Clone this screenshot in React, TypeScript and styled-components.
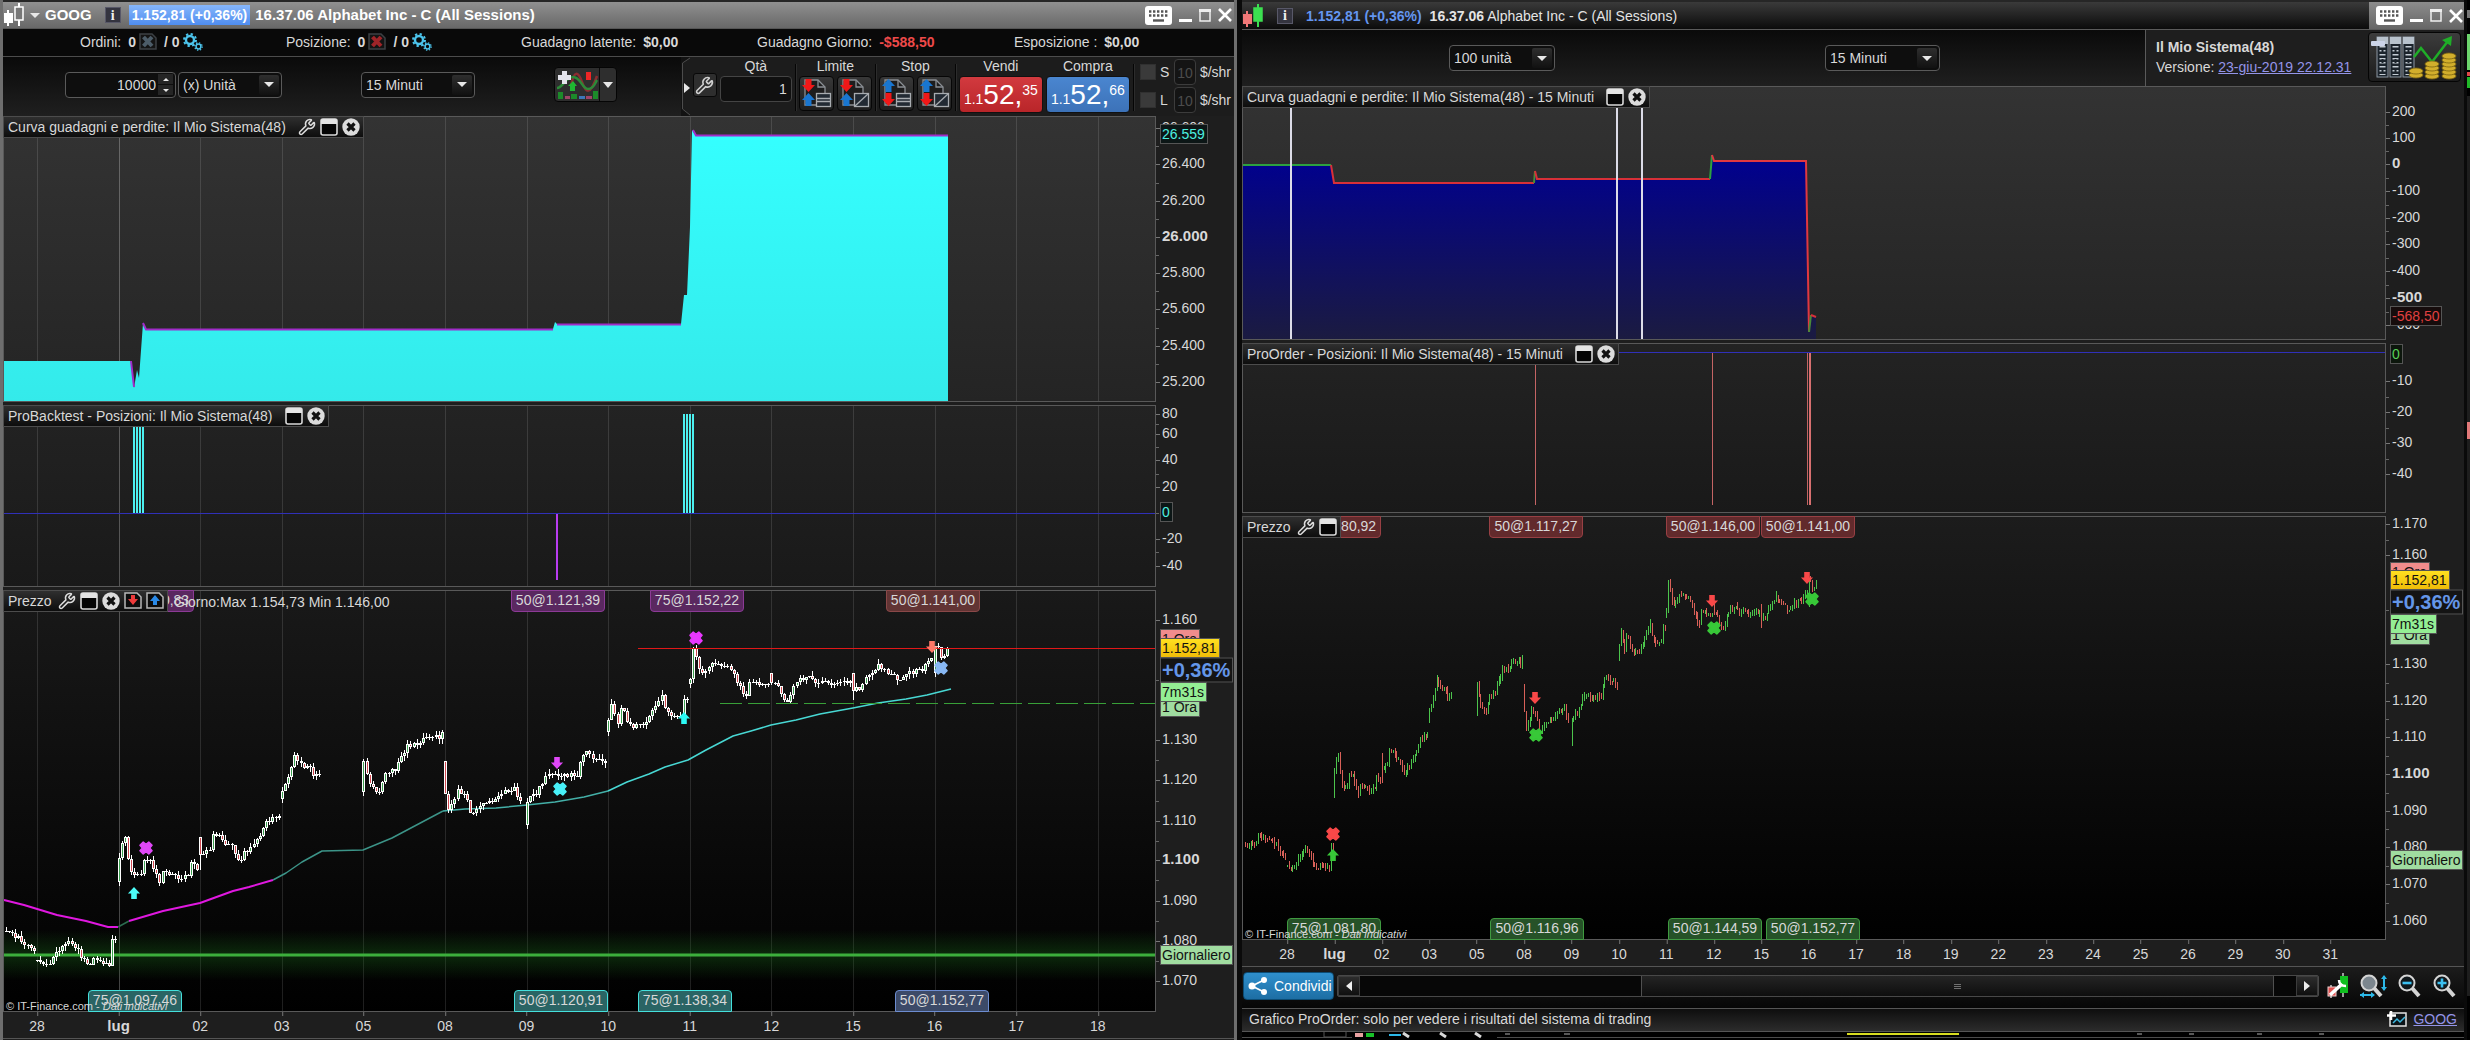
import React from "react";
import styled, { createGlobalStyle, css } from "styled-components";
import { Wrench } from "lucide-react";

/* ---------- market data ---------- */

type Point = [number, number];
interface Session {
  day: string;
  from: number;
  bars: number;
  open?: [number, number];
  path: Point[];
}
interface Bar {
  at: number;
  open: number;
  close: number;
  low: number;
  high: number;
}

const SESSIONS: Session[] = [
  { day: "27", from: 3, bars: 26, path: [[3, 1081.2], [8, 1080.6], [10, 1083.1], [15, 1082.5], [18, 1081.8], [21, 1080], [24, 1078.4], [25, 1077]] },
  { day: "28", from: 0, bars: 26, path: [[0, 1075.2], [3, 1074.2], [5, 1075.6], [7, 1077.9], [10, 1079.3], [13, 1077.6], [14, 1075.2], [17, 1074.2], [19, 1075.9], [21, 1074.6], [23, 1074.2], [24, 1080], [25, 1080.7]] },
  { day: "lug", from: 0, bars: 26, open: [1093.7, 1101.8], path: [[0, 1101], [1, 1104.8], [2, 1106.4], [3, 1100.5], [4, 1097.4], [5, 1095.9], [7, 1096.7], [8, 1099.8], [10, 1100], [11, 1097.8], [13, 1094.7], [14, 1097.3], [18, 1096.2], [20, 1094.9], [22, 1096.7], [23, 1099.3], [25, 1097.6]] },
  { day: "02", from: 0, bars: 26, open: [1097.6, 1105.8], path: [[0, 1101.8], [3, 1102.5], [4, 1106.4], [6, 1106.1], [8, 1104.4], [10, 1104.4], [11, 1101.8], [12, 1099.8], [14, 1101.8], [17, 1103.9], [19, 1106.4], [21, 1109.5], [23, 1110.5], [25, 1111]] },
  { day: "03", from: 0, bars: 13, open: [1114.2, 1118.3], path: [[0, 1117.8], [1, 1119.1], [3, 1122.7], [4, 1126.2], [5, 1124.7], [7, 1123.2], [9, 1123.2], [10, 1121.4], [12, 1121.7]] },
  { day: "05", from: 0, bars: 26, open: [1116, 1125.2], path: [[0, 1124.8], [1, 1121.2], [3, 1117.6], [5, 1117.6], [7, 1122.2], [10, 1122.7], [12, 1126.2], [14, 1128.3], [16, 1129.3], [18, 1128.8], [20, 1131.3], [22, 1130.8], [23, 1131.8], [24, 1130.6], [25, 1131.5]] },
  { day: "08", from: 0, bars: 25, open: [1117.1, 1124.7], path: [[0, 1117.3], [1, 1113], [3, 1115.6], [4, 1117.1], [6, 1116.6], [8, 1112.5], [9, 1112], [12, 1114], [15, 1115], [17, 1116.6], [22, 1117.6], [24, 1115]] },
  { day: "09", from: 0, bars: 26, open: [1107.9, 1115.5], path: [[0, 1114], [1, 1115.6], [3, 1116.6], [5, 1119.6], [7, 1121.7], [10, 1120.6], [12, 1121.4], [16, 1121.2], [17, 1124.7], [19, 1126.7], [21, 1125.7], [25, 1124.6]] },
  { day: "10", from: 0, bars: 26, open: [1131.1, 1135.6], path: [[0, 1135.4], [1, 1138.8], [3, 1134.4], [4, 1138.4], [6, 1134.9], [8, 1132.3], [9, 1134.4], [11, 1134.4], [13, 1135.9], [15, 1137.9], [17, 1141.2], [18, 1137.9], [20, 1135.9], [23, 1136], [24, 1140], [25, 1140.3]] },
  { day: "11", from: 0, bars: 26, open: [1142.9, 1145.4], path: [[0, 1145], [1, 1152.4], [2, 1150.5], [3, 1148.1], [4, 1146.6], [6, 1148.1], [8, 1149.4], [11, 1148.6], [13, 1148.1], [15, 1144.5], [17, 1142], [18, 1140.5], [19, 1144], [21, 1144.3], [25, 1144.1]] },
  { day: "12", from: 0, bars: 26, open: [1143.6, 1146.8], path: [[0, 1144], [2, 1143.5], [3, 1141], [5, 1139.5], [7, 1143.9], [8, 1144.5], [12, 1146.4], [14, 1144.5], [20, 1144], [25, 1144.7]] },
  { day: "15", from: 0, bars: 26, open: [1140, 1146.6], path: [[0, 1142.5], [3, 1143.3], [4, 1145.6], [6, 1147.1], [8, 1148.6], [10, 1147.6], [13, 1146.1], [15, 1145], [17, 1146.6], [22, 1147.8], [24, 1149.1], [25, 1150.6]] },
  { day: "16", from: 0, bars: 5, open: [1145.8, 1153.4], path: [[0, 1153], [1, 1153], [2, 1150.8], [3, 1151.2], [4, 1152.8]] },
];

function priceAt(path: Point[], i: number) {
  for (let k = 1; k < path.length; k++) {
    const [x0, y0] = path[k - 1];
    const [x1, y1] = path[k];
    if (i <= x1) return y0 + ((y1 - y0) * (i - x0)) / (x1 - x0);
  }
  return path[path.length - 1][1];
}

function buildBars(): Bar[] {
  let seed = 48;
  const rnd = () => {
    seed = (seed * 16807) % 2147483647;
    return seed / 2147483647;
  };
  const out: Bar[] = [];
  SESSIONS.forEach((s, n) => {
    let last = s.open ? s.open[0] : s.path[0][1];
    for (let i = s.from; i < s.bars; i++) {
      const close = priceAt(s.path, i) + (rnd() - 0.5) * 1.3;
      const first = i === 0 && s.open;
      const open = first ? (close > (s.open![0] + s.open![1]) / 2 ? s.open![0] + 1 : s.open![1]) : last;
      const high = first ? s.open![1] : Math.max(open, close) + rnd() * 1.2;
      const low = first ? s.open![0] : Math.min(open, close) - rnd() * 1.2;
      out.push({ at: (n - 1) * 26 + i, open, close, low, high });
      last = close;
    }
  });
  return out;
}
const BARS = buildBars();

/* ---------- base ---------- */

const Page = createGlobalStyle`
  * { box-sizing: border-box; }
  body { margin: 0; background: #000; }
  body, button, input, select {
    font-family: "Liberation Sans", Arial, sans-serif;
    font-size: 14px;
    line-height: 18px;
    color: #d8d8d8;
  }
  button { margin: 0; padding: 0; cursor: pointer; }
  svg { display: block; flex: none; }
`;

const Desktop = styled.div`
  display: grid;
  grid-template-columns: 1237fr 1230fr 3px;
  min-height: 100vh;
  background: #000;
`;
const Frame = styled.section<{ $active?: boolean }>`
  display: flex;
  flex-direction: column;
  min-width: 0;
  background: #1e1e1e;
  ${(p) =>
    p.$active
      ? css`border: solid #6e6e6e; border-width: 0 3px;`
      : css`border: solid #0a0a0a; border-width: 0 3px 0 5px;`}
`;
const TitleBar = styled.header<{ $active?: boolean }>`
  display: flex;
  align-items: center;
  height: ${(p) => (p.$active ? 29 : 30)}px;
  border-top: 2px solid #262626;
  border-bottom: 1px solid ${(p) => (p.$active ? "#555" : "#5a5a5a")};
  background: linear-gradient(${(p) => (p.$active ? "#909090, #686868" : "#3a3a3a, #0b0b0b")});
  color: ${(p) => (p.$active ? "#fff" : "#e4e4e4")};
  white-space: nowrap;
`;
const Symbol = styled.button`
  display: flex;
  align-items: center;
  gap: 5px;
  border: 0;
  background: none;
  color: #fff;
  font-size: 15px;
  font-weight: bold;
`;
const InfoBadge = styled.button<{ $gap: number }>`
  width: 16px;
  height: 16px;
  margin: 0 ${(p) => p.$gap}px 0 13px;
  border: 1px solid #585868;
  background: #34343f;
  color: #f0f0f0;
  font: bold 14px/13px "Liberation Serif", serif;
`;
const Quote = styled.b<{ $boxed?: boolean }>`
  ${(p) =>
    p.$boxed
      ? css`padding: 1px 3px; background: linear-gradient(#86b6fb, #4f8df0);`
      : css`color: #6496f0;`}
`;
const Instrument = styled.span<{ $bold?: boolean }>`
  margin-left: ${(p) => (p.$bold ? 5 : 8)}px;
  font-weight: ${(p) => (p.$bold ? "bold" : "normal")};
  font-size: ${(p) => (p.$bold ? 15 : 14)}px;
`;
const WindowButtons = styled.div<{ $boxed?: boolean }>`
  display: flex;
  align-items: center;
  gap: 7px;
  align-self: stretch;
  margin-left: auto;
  padding: 0 ${(p) => (p.$boxed ? 1 : 2)}px 0 7px;
  ${(p) => p.$boxed && css`background: linear-gradient(#8c8c8c, #666);`}
  button { border: 0; background: none; }
`;

/* ---------- toolbar pieces ---------- */

const Totals = styled.div`
  display: grid;
  grid-template-columns: 206fr 235fr 236fr 257fr 220fr;
  align-items: center;
  height: 28px;
  padding: 0 0 2px 77px;
  background: #090909;
  border-bottom: 1px solid #4c4c4c;
  white-space: nowrap;
`;
const Total = styled.div`
  display: flex;
  align-items: center;
  gap: 7px;
`;
const Figure = styled.b<{ $loss?: boolean }>`
  display: inline-flex;
  align-items: center;
  gap: 3px;
  color: ${(p) => (p.$loss ? "#ef4a4a" : "#d8d8d8")};
`;
const PlainButton = styled.button`
  border: 0;
  background: none;
`;
const Toolbar = styled.div<{ $h: number }>`
  display: flex;
  align-items: stretch;
  min-height: ${(p) => p.$h}px;
  background: linear-gradient(#0a0a0a, #1f1f1f);
`;
const Filters = styled.div`
  display: flex;
  align-items: center;
  padding: 0 0 4px 62px;
`;
const Box = styled.div<{ $w: number; $gap?: number }>`
  display: flex;
  align-items: center;
  width: ${(p) => p.$w}px;
  height: 26px;
  margin-left: ${(p) => p.$gap ?? 0}px;
  padding: 2px;
  border: 1px solid #5a5a5a;
  border-radius: 4px;
  background: #0e0e0e;
  position: relative;
`;
const Select = styled.select`
  appearance: none;
  width: 100%;
  height: 20px;
  padding: 0 24px 0 2px;
  border: 0;
  background: transparent;
`;
const DropMark = styled.span`
  position: absolute;
  right: 2px;
  top: 2px;
  display: grid;
  place-items: center;
  width: 20px;
  height: 20px;
  border-radius: 2px;
  background: linear-gradient(#2e2e2e, #111);
  pointer-events: none;
`;
const Field = styled.input<{ $dim?: boolean }>`
  width: 100%;
  min-width: 0;
  height: 20px;
  padding: 0 2px;
  border: 0;
  background: transparent;
  text-align: right;
  color: ${(p) => (p.$dim ? "#4c4c4c" : "#d8d8d8")};
`;
const Stepper = styled.div`
  display: flex;
  flex-direction: column;
  gap: 1px;
  button {
    display: grid;
    place-items: center;
    width: 15px;
    height: 10px;
    border: 0;
    background: #252525;
  }
`;
const IndicatorButton = styled.button`
  display: flex;
  height: 35px;
  margin-left: 79px;
  border: 1px solid #050505;
  border-radius: 4px;
  background: #2e2e2e;
  overflow: hidden;
  align-items: center;
`;
const TradePanel = styled.div`
  display: flex;
  gap: 3px;
  margin-left: auto;
  padding-right: 3px;
  background: #1c1c1c;
`;
const Column = styled.div<{ $w?: number }>`
  display: flex;
  flex-direction: column;
  width: ${(p) => (p.$w ? `${p.$w}px` : "auto")};
  text-align: center;
`;
const Caption = styled.label`
  line-height: 18px;
  margin-bottom: 1px;
`;
const Divider = styled.i`
  width: 1px;
  margin: 7px 0 5px;
  background: #050505;
  box-shadow: 1px 0 #2c2c2c;
`;
const Pair = styled.div`
  display: flex;
  gap: 3px;
`;
const OrderButton = styled.button`
  display: grid;
  place-items: center;
  width: 35px;
  height: 35px;
  border: 1px solid #060606;
  border-radius: 4px;
  background: linear-gradient(#383838, #1f1f1f);
`;
const ToolButton = styled.button`
  display: grid;
  place-items: center;
  width: 24px;
  height: 24px;
  margin-top: 16px;
  border: 1px solid #080808;
  border-radius: 3px;
  background: #2e2e2e;
`;
const QuantityBox = styled.div`
  display: flex;
  align-items: center;
  height: 26px;
  border: 1px solid #444;
  border-radius: 4px;
  background: #101010;
  padding: 0 2px;
`;
const DealButton = styled.button<{ $tone: "sell" | "buy" }>`
  display: flex;
  justify-content: center;
  align-items: baseline;
  width: 84px;
  height: 37px;
  border: 1px solid #111;
  border-radius: 4px;
  background: ${(p) => (p.$tone === "sell" ? "linear-gradient(#d23a3f, #b92529)" : "linear-gradient(#4a86d0, #3c72b8)")};
  color: #fff;
  b { font-weight: normal; font-size: 28px; line-height: 35px; }
  sup { align-self: flex-start; margin-top: 4px; line-height: 18px; vertical-align: baseline; font-size: 14px; }
`;
const Limits = styled.div`
  display: flex;
  flex-direction: column;
  gap: 2px;
  padding: 2px 0 0 3px;
`;
const LimitRow = styled.div`
  display: flex;
  align-items: center;
  gap: 4px;
`;
const LimitLabel = styled.label`
  display: flex;
  align-items: center;
  gap: 4px;
  width: 30px;
  input {
    appearance: none;
    width: 16px;
    height: 16px;
    margin: 0;
    background: #3a3a3a;
    border: 1px solid #303030;
  }
`;
const LimitBox = styled.div`
  width: 22px;
  height: 26px;
  padding: 3px 0;
  border: 1px solid #3c3c3c;
  border-radius: 4px;
  background: #141414;
`;

/* ---------- charts ---------- */

const Charts = styled.div`
  display: flex;
  flex-direction: column;
  flex: 1;
  gap: 3px;
`;
const PaneRow = styled.div<{ $grow: number }>`
  display: grid;
  grid-template-columns: minmax(0, 1fr) 78px;
  flex: ${(p) => p.$grow} 1 0;
  min-height: 90px;
`;
const Plot = styled.div<{ $from: string; $to: string }>`
  position: relative;
  overflow: hidden;
  background: linear-gradient(${(p) => p.$from}, ${(p) => p.$to});
  &::after {
    content: "";
    position: absolute;
    inset: 0;
    border: 1px solid #595959;
    pointer-events: none;
  }
`;
const Canvas = styled.svg`
  position: absolute;
  inset: 0;
  width: 100%;
  height: 100%;
`;
const PaneTitle = styled.div`
  position: absolute;
  z-index: 3;
  left: 0;
  top: 0;
  display: flex;
  align-items: center;
  gap: 4px;
  height: 22px;
  padding: 0 3px 1px 4px;
  border: 1px solid #4c4c4c;
  background: linear-gradient(#2f2f2f, #0d0d0d);
  white-space: nowrap;
`;
const TitleText = styled.span<{ $long?: boolean }>`
  padding-right: ${(p) => (p.$long ? 8 : 2)}px;
`;
const TradeTag = styled.span<{ $tone: Tone; $edge: "top" | "bottom" }>`
  position: absolute;
  z-index: 1;
  ${(p) => p.$edge}: 0;
  width: 94px;
  height: 22px;
  line-height: 19px;
  text-align: center;
  transform: translateX(-50%);
  border: 1px solid ${(p) => TONES[p.$tone][1]};
  border-radius: ${(p) => (p.$edge === "top" ? "0 0 4px 4px" : "4px 4px 0 0")};
  background: ${(p) => TONES[p.$tone][0]};
`;
const Marker = styled.svg`
  position: absolute;
  z-index: 2;
  width: 14px;
  height: 14px;
  transform: translate(-50%, -50%);
`;
const DayRange = styled.span`
  position: absolute;
  z-index: 2;
  left: 171px;
  top: 3px;
`;
const Credit = styled.small`
  position: absolute;
  z-index: 2;
  left: 3px;
  bottom: 0;
  font-size: 11px;
  line-height: 12px;
`;
const Axis = styled.div`
  position: relative;
`;
const AxisLabel = styled.span<{ $bold?: boolean }>`
  position: absolute;
  left: 0;
  margin-top: -1px;
  padding-left: 6px;
  transform: translateY(-50%);
  white-space: nowrap;
  font-weight: ${(p) => (p.$bold ? "bold" : "normal")};
  font-size: ${(p) => (p.$bold ? 15 : 14)}px;
  &::before {
    content: "";
    position: absolute;
    left: 0;
    top: 10px;
    width: 4px;
    height: 1px;
    background: #777;
  }
`;
const MinorTick = styled.i`
  position: absolute;
  left: 0;
  width: 3px;
  height: 1px;
  background: #666;
`;
const AxisTag = styled.span<{ $look: Look }>`
  position: absolute;
  left: 4px;
  margin-top: -1px;
  padding: 0 2px 0 1px;
  border: 1px solid #555;
  transform: translateY(-50%);
  white-space: nowrap;
  ${(p) => LOOKS[p.$look]}
`;
const TimeAxis = styled.div`
  position: relative;
  height: 26px;
  margin-right: 78px;
  flex: none;
`;
const TimeLabel = styled.span<{ $bold?: boolean }>`
  position: absolute;
  top: 5px;
  transform: translateX(-50%);
  font-weight: ${(p) => (p.$bold ? "bold" : "normal")};
  font-size: ${(p) => (p.$bold ? 15 : 14)}px;
  &::before {
    content: "";
    position: absolute;
    left: 50%;
    top: -5px;
    width: 1px;
    height: 4px;
    background: #777;
  }
`;

const TONES = {
  violet: ["#5a2860", "#8c3a96"],
  brown: ["#623434", "#8a4848"],
  teal: ["#2a6464", "#44e0dc"],
  slate: ["#3c4a68", "#6c8cd0"],
  red: ["#622a2c", "#984044"],
  green: ["#265228", "#3f9a40"],
} as const;
type Tone = keyof typeof TONES;

const LOOKS = {
  cyan: css`color: #4cf0e0; background: #0c1616;`,
  red: css`color: #e04040; background: #160c0c;`,
  lime: css`color: #58d058; background: #0c160c;`,
  pink: css`color: #111; background: #f08c8c;`,
  gold: css`color: #111; background: linear-gradient(#ffe020, #f0bc08); z-index: 1;`,
  change: css`color: #6496e8; background: #141414; font-weight: bold; font-size: 20px; line-height: 23px;`,
  mint: css`color: #111; background: #94ee94; z-index: 1;`,
  sage: css`color: #111; background: #a0dca0;`,
};
type Look = keyof typeof LOOKS;

interface AxisItem {
  text: string;
  at: number;
  bold?: boolean;
  look?: Look;
}
interface MarkItem {
  x: number;
  y: number;
  kind: "up" | "down" | "exit";
  color: string;
}
interface TagItem {
  text: string;
  x: number;
  tone: Tone;
  edge: "top" | "bottom";
}

const pct = (v: number, of: number) => `${(v / of) * 100}%`;

/* ---------- icons ---------- */

const Caret = ({ up, size = 10 }: { up?: boolean; size?: number }) => (
  <svg width={size} height={size / 2} viewBox="0 0 10 5">
    <path d={up ? "M0 5h10L5 0z" : "M0 0h10L5 5z"} fill="#e8e8e8" />
  </svg>
);
const CandlesIcon = ({ colors }: { colors: [string, string] }) => (
  <svg width="22" height="24" viewBox="0 0 22 24">
    <path d="M5 7v16" stroke={colors[0]} strokeWidth="2" />
    <path d="M16 0v23" stroke={colors[1]} strokeWidth="2" />
    <rect x="1" y="10" width="9" height="10" fill={colors[0]} />
    <rect x="12" y="4" width="8" height="13" fill={colors[1] === "#fff" ? "#777" : colors[1]} stroke={colors[1]} strokeWidth="1.5" />
  </svg>
);
const KeyboardIcon = () => (
  <svg width="27" height="19" viewBox="0 0 27 19">
    <rect width="27" height="19" rx="3" fill="#fff" />
    <path d="M4 5.5h19M4 9.5h19" stroke="#555" strokeWidth="2.4" strokeDasharray="2.4 1.6" />
    <path d="M8 14.5h11" stroke="#555" strokeWidth="2.4" />
  </svg>
);
const MinIcon = () => (
  <svg width="13" height="13" viewBox="0 0 13 13"><path d="M0 11.5h13" stroke="#fff" strokeWidth="3" /></svg>
);
const MaxIcon = () => (
  <svg width="12" height="13" viewBox="0 0 12 13">
    <path d="M1 1h10v11H1z" fill="none" stroke="#eee" strokeWidth="1.5" />
    <path d="M0 1.5h12" stroke="#eee" strokeWidth="3" />
  </svg>
);
const CrossIcon = () => (
  <svg width="14" height="14" viewBox="0 0 14 14"><path d="M1 1l12 12M13 1L1 13" stroke="#fff" strokeWidth="2.6" /></svg>
);
const GearsIcon = () => (
  <svg width="20" height="18" viewBox="0 0 20 18" fill="none" stroke="#4cc4ec">
    <circle cx="7" cy="7" r="4" strokeWidth="2.4" />
    <circle cx="7" cy="7" r="6" strokeWidth="2" strokeDasharray="2.3 2.4" />
    <circle cx="15.5" cy="13.5" r="2.4" strokeWidth="1.5" />
    <circle cx="15.5" cy="13.5" r="3.7" strokeWidth="1.3" strokeDasharray="1.4 1.5" />
  </svg>
);
const CancelIcon = ({ color }: { color: string }) => (
  <svg width="18" height="17" viewBox="0 0 18 17">
    <path d="M1 1h12l4 4v11H1z" fill="#141414" stroke="#3c4044" strokeWidth="1.5" />
    <path d="M4.500 4l8.500 9M13 4l-8.500 9" stroke={color} strokeWidth="4" />
  </svg>
);
const WindowIcon = () => (
  <svg width="18" height="18" viewBox="0 0 18 18">
    <rect x="1" y="1" width="16" height="16" rx="2" fill="#050505" stroke="#d8d8d8" strokeWidth="1.600" />
    <path d="M1 2.500q0-1.500 1.500-1.500h13q1.500 0 1.500 1.500V6H1z" fill="#e4e4e4" />
  </svg>
);
const CloseIcon = () => (
  <svg width="18" height="18" viewBox="0 0 18 18">
    <circle cx="9" cy="9" r="8.700" fill="#dcdcdc" />
    <path d="M5.500 5.500l7 7M12.500 5.500l-7 7" stroke="#111" strokeWidth="3.200" />
  </svg>
);
const SheetIcon = ({ up }: { up?: boolean }) => (
  <svg width="18" height="17" viewBox="0 0 18 17">
    <path d="M1 1h12l4 4v11H1z" fill="#0c0c0c" stroke="#b8b8b8" strokeWidth="1.500" />
    {up ? <path d="M7 13V9H4l5-6 5 6h-3v4z" fill="#2a8ae8" /> : <path d="M7 3v4H4l5 6 5-6h-3V3z" fill="#ee3a3a" />}
  </svg>
);
const ARROW_DOWN = "M3.500 0h6v6H13l-6.500 7L0 6h3.500z";
const ARROW_UP = "M3.500 13h6V7H13L6.500 0 0 7h3.500z";
const OrderIcon = ({ stop, slash }: { stop?: boolean; slash?: boolean }) => (
  <svg width="31" height="31" viewBox="0 0 31 31">
    <path d="M4 2h13l7 7v18H4z" fill="#1d1d1d" stroke="#8a8f94" strokeWidth="1.300" />
    <path d="M17 2v7h7" fill="none" stroke="#8a8f94" strokeWidth="1.300" />
    <path transform="translate(1 1)" d={stop ? ARROW_UP : ARROW_DOWN} fill={stop ? "#1976d0" : "#f01818"} />
    <path transform="translate(1 15)" d={stop ? ARROW_DOWN : ARROW_UP} fill={stop ? "#f01818" : "#1976d0"} />
    <rect x="15.500" y="15.500" width="14" height="13" fill="#222a33" stroke="#a8acb0" strokeWidth="1.300" />
    {slash ? <path d="M16 28l13-12" stroke="#a8acb0" strokeWidth="1.300" /> : <path d="M16 20.500h13M16 23.500h13" stroke="#a8acb0" strokeWidth="1.300" />}
  </svg>
);
const IndicatorIcon = () => (
  <svg width="44" height="33" viewBox="0 0 44 33">
    <path d="M16 18C19 2 23 3 27 14s8 14 15-6" fill="none" stroke="#8c2c30" strokeWidth="2.500" />
    <path d="M2 20C8 20 10 9 18 9s9 12 15 12 7-6 9-9" fill="none" stroke="#2c8a38" strokeWidth="2.500" />
    <path d="M7 3h5v4h4v5h-4v4H7v-4H3V7h4z" fill="#e4e4ec" />
    <path d="M31 4h5v8h-5z" fill="#ee2626" />
    <path d="M15 23v-5h-2l5-5 4 5h-2v5z" fill="#1fb832" />
    <path d="M3 24h5v7H3zM16 26h6v5h-6zM38 23h5v8h-5z" fill="#1c8a2a" />
    <path d="M10 28h5v3h-5zM31 28h6v3h-6z" fill="#a04468" />
    <path d="M24 28h6v3h-6z" fill="#3c78b8" />
  </svg>
);
const SystemIcon = () => (
  <svg width="91" height="48" viewBox="0 0 91 48">
    {[8, 21, 34].map((x) => (
      <g key={x}>
        <rect x={x} y="4" width="11" height="40" fill="#1c242c" stroke="#8d98a4" />
        <rect x={x} y="4" width="11" height="7" fill="#b8c2cc" />
        <path d={`M${x + 5.5} 13v29`} stroke="#c4ccd4" strokeWidth="6" strokeDasharray="1.400 2.600" />
        <path d={`M${x + 5.5} 15v26`} stroke="#1c242c" strokeWidth="2" strokeDasharray="4 7" />
      </g>
    ))}
    <rect x="2" y="8" width="14" height="5" rx="1" fill="#ccd4e8" />
    <path d="M45 24l7-9 11 14L79 8" fill="none" stroke="#1fae28" strokeWidth="2.500" />
    <path d="M83 3l-1 10-9-6z" fill="#1fae28" />
    {[[47, 42, 2], [63, 42, 4], [80, 42, 6]].map(([x, y, n]) =>
      Array.from({ length: n }, (_, i) => (
        <ellipse key={`${x}-${i}`} cx={x} cy={y - i * 4 + (n === 2 ? 0 : 1)} rx="7" ry="3" fill="#d2ae2c" stroke="#7c6410" strokeWidth="0.800" />
      ))
    )}
  </svg>
);
const ShareIcon = () => (
  <svg width="20" height="18" viewBox="0 0 20 18">
    <path d="M16 3L4 9l12 6" fill="none" stroke="#fff" strokeWidth="1.800" />
    <circle cx="16" cy="3" r="3" fill="#fff" /><circle cx="4" cy="9" r="3.500" fill="#fff" /><circle cx="16" cy="15" r="3" fill="#fff" />
  </svg>
);
const Lens = ({ children, solid }: { children?: React.ReactNode; solid?: boolean }) => (
  <>
    <path d="M14 14l7 8" stroke="#d4d4d4" strokeWidth="4" />
    <circle cx="9" cy="9" r="7.500" fill={solid ? "#7c868e" : "#10181c"} stroke="#d4d4d4" strokeWidth="2" />
    {children}
  </>
);
const ZoomIcon = ({ plus }: { plus?: boolean }) => (
  <svg width="24" height="24" viewBox="0 0 24 24">
    <Lens><path d={plus ? "M4.500 9h9M9 4.500v9" : "M4.500 9h9"} stroke="#3cc0f0" strokeWidth="2.600" /></Lens>
  </svg>
);
const FitIcon = () => (
  <svg width="27" height="25" viewBox="0 0 27 25">
    <Lens solid />
    <path d="M24 2v14M0 21h14" stroke="#2cb8e8" strokeWidth="2" />
    <path d="M21 5l3-4 3 4zM21 13l3 4 3-4zM4 18l-4 3 4 3zM11 18l4 3-4 3z" fill="#2cb8e8" />
  </svg>
);
const ChartSetupIcon = () => (
  <svg width="22" height="26" viewBox="0 0 22 26">
    <path d="M4 12v13M16 0v24" stroke="#ccc" strokeWidth="1.500" />
    <rect x="1" y="14" width="8" height="9" fill="#e05050" stroke="#f0d0d0" />
    <rect x="13" y="3" width="8" height="17" fill="#10c020" />
    <path d="M3 22L15 11" stroke="#fff" strokeWidth="3.500" />
    <path d="M12 7q0 6 7 6" fill="none" stroke="#fff" strokeWidth="2.500" />
  </svg>
);
const AddChartIcon = () => (
  <svg width="20" height="16" viewBox="0 0 20 16">
    <rect x="3" y="2" width="16" height="13" fill="#0c1418" stroke="#e4e4e4" strokeWidth="1.500" />
    <path d="M6 12l4-4 3 3 5-5" fill="none" stroke="#3cb8e0" strokeWidth="1.500" />
    <path d="M4 0v9M0 4.500h9" stroke="#fff" strokeWidth="2.500" />
  </svg>
);

/* ---------- chart components ---------- */

function MarkerShape({ x, y, kind, color, w, h }: MarkItem & { w: number; h: number }) {
  return (
    <Marker viewBox="-1 -1 15 15" style={{ left: pct(x, w), top: pct(y, h) }}>
      {kind === "exit" ? (
        <path d="M3.500 0L6.500 2.500 9.500 0 13 3.500 10.500 6.500 13 9.500 9.500 13 6.500 10.500 3.500 13 0 9.500 2.500 6.500 0 3.500z" fill={color} stroke={color} strokeWidth="1.500" strokeLinejoin="round" />
      ) : (
        <path d={kind === "up" ? ARROW_UP : ARROW_DOWN} fill={color} />
      )}
    </Marker>
  );
}

function ScaleAxis({ items, h }: { items: AxisItem[]; h: number }) {
  const plain = items.filter((i) => !i.look);
  return (
    <Axis>
      {plain.slice(1).map((it, i) => (
        <MinorTick key={it.text} style={{ top: pct((it.at + plain[i].at) / 2, h) }} />
      ))}
      {items.map((it, i) =>
        it.look ? (
          <AxisTag key={i} $look={it.look} style={{ top: pct(it.at, h) }}>{it.text}</AxisTag>
        ) : (
          <AxisLabel key={i} $bold={it.bold} style={{ top: pct(it.at, h) }}>{it.text}</AxisLabel>
        )
      )}
    </Axis>
  );
}

interface PaneProps {
  w: number;
  h: number;
  shade: [string, string];
  title: string;
  tools: React.ReactNode;
  axis: AxisItem[];
  tags?: TagItem[];
  marks?: MarkItem[];
  overlay?: React.ReactNode;
  children: React.ReactNode;
}
function Pane({ w, h, shade, title, tools, axis, tags = [], marks = [], overlay, children }: PaneProps) {
  return (
    <PaneRow $grow={h}>
      <Plot $from={shade[0]} $to={shade[1]}>
        <Canvas viewBox={`0 0 ${w} ${h}`} preserveAspectRatio="none">{children}</Canvas>
        {tags.map((t) => (
          <TradeTag key={t.edge + t.text} $tone={t.tone} $edge={t.edge} style={{ left: pct(t.x, w) }}>{t.text}</TradeTag>
        ))}
        {marks.map((m, i) => <MarkerShape key={i} {...m} w={w} h={h} />)}
        {overlay}
        <PaneTitle><TitleText $long={title.length > 10}>{title}</TitleText>{tools}</PaneTitle>
      </Plot>
      <ScaleAxis items={axis} h={h} />
    </PaneRow>
  );
}

function TimeScale({ days, start, step, w }: { days: string[]; start: number; step: number; w: number }) {
  return (
    <TimeAxis>
      {days.map((d, i) => (
        <TimeLabel key={d} $bold={d === "lug"} style={{ left: pct(start + i * step, w) }}>{d}</TimeLabel>
      ))}
    </TimeAxis>
  );
}

const TitleTool = ({ label, children }: { label: string; children: React.ReactNode }) => (
  <PlainButton aria-label={label}>{children}</PlainButton>
);
const Tools = ({ wrench, close = true }: { wrench?: boolean; close?: boolean }) => (
  <>
    {wrench && <TitleTool label="Impostazioni"><Wrench size={18} color="#dcdcdc" strokeWidth={2} /></TitleTool>}
    <TitleTool label="Ingrandisci"><WindowIcon /></TitleTool>
    {close && <TitleTool label="Chiudi"><CloseIcon /></TitleTool>}
  </>
);
const WinControls = ({ boxed }: { boxed?: boolean }) => (
  <WindowButtons $boxed={boxed}>
    <button aria-label="Tastiera"><KeyboardIcon /></button>
    <button aria-label="Riduci"><MinIcon /></button>
    <button aria-label="Massimizza"><MaxIcon /></button>
    <button aria-label="Chiudi finestra"><CrossIcon /></button>
  </WindowButtons>
);
const DropDown = ({ label, value, w, gap }: { label: string; value: string; w: number; gap?: number }) => (
  <Box $w={w} $gap={gap}>
    <Select aria-label={label} defaultValue={value}><option>{value}</option></Select>
    <DropMark><Caret /></DropMark>
  </Box>
);

/* ---------- left window ---------- */

const LW = 1153;
const LEFT_START = 34;
const LEFT_STEP = 81.6;
const LEFT_DAYS = ["28", "lug", "02", "03", "05", "08", "09", "10", "11", "12", "15", "16", "17", "18"];
const leftY = (p: number) => 29.6 + (1160 - p) * 4.013;

const Grid = ({ h }: { h: number }) => (
  <g shapeRendering="crispEdges">
    {LEFT_DAYS.map((d, i) => (
      <path key={d} d={`M${Math.round(LEFT_START + i * LEFT_STEP) + 0.5} 0V${h}`} stroke="#fff" strokeOpacity={d === "lug" ? 0.26 : 0.12} />
    ))}
  </g>
);

const EQUITY = "0,245 128,245 131,272 134,254 136,262 140,207 143,213 550,213 552,206 554,208 678,208 681,179 684,179 687,111 689,14 693,19 945,19";

const Candles = () => (
  <g shapeRendering="crispEdges">
    {BARS.map((b) => {
      const x = Math.round(LEFT_START + (b.at * LEFT_STEP) / 26);
      if (x < 3) return null;
      const top = Math.round(leftY(Math.max(b.open, b.close)));
      const height = Math.max(1, Math.round(leftY(Math.min(b.open, b.close))) - top);
      const hi = Math.round(leftY(b.high));
      return (
        <g key={b.at}>
          <rect x={x} y={hi} width="1" height={Math.round(leftY(b.low)) - hi} fill="#fff" />
          <rect x={x - 1} y={top} width="3" height={height} fill="#fff" />
          {height > 2 && <rect x={x} y={top + 1} width="1" height={height - 2} fill={b.close > b.open ? "#3ca050" : "#d04850"} />}
        </g>
      );
    })}
  </g>
);

const LEFT_EQUITY_AXIS: AxisItem[] = [
  { text: "26.600", at: 12 }, { text: "26.400", at: 48 }, { text: "26.200", at: 85 }, { text: "26.000", at: 121, bold: true },
  { text: "25.800", at: 157 }, { text: "25.600", at: 193 }, { text: "25.400", at: 230 }, { text: "25.200", at: 266 },
  { text: "26.559", at: 19, look: "cyan" },
];
const LEFT_POS_AXIS: AxisItem[] = [
  { text: "80", at: 9 }, { text: "60", at: 29 }, { text: "40", at: 55 }, { text: "20", at: 82 },
  { text: "-20", at: 134 }, { text: "-40", at: 161 }, { text: "0", at: 108, look: "cyan" },
];
const LEFT_PRICE_AXIS: AxisItem[] = [
  { text: "1.160", at: 30 }, { text: "1.130", at: 150 }, { text: "1.120", at: 190 }, { text: "1.110", at: 231 },
  { text: "1.100", at: 270, bold: true }, { text: "1.090", at: 311 }, { text: "1.080", at: 351 }, { text: "1.070", at: 391 },
  { text: "1 Ora", at: 50, look: "pink" }, { text: "1.152,81", at: 59, look: "gold" }, { text: "+0,36%", at: 81, look: "change" },
  { text: "1 Ora", at: 118, look: "sage" }, { text: "7m31s", at: 103, look: "mint" }, { text: "Giornaliero", at: 366, look: "sage" },
];
const LEFT_TAGS: TagItem[] = [
  { text: "75@1.100,83", x: 144, tone: "violet", edge: "top" },
  { text: "50@1.121,39", x: 555, tone: "violet", edge: "top" },
  { text: "75@1.152,22", x: 694, tone: "violet", edge: "top" },
  { text: "50@1.141,00", x: 930, tone: "brown", edge: "top" },
  { text: "75@1.097,46", x: 132, tone: "teal", edge: "bottom" },
  { text: "50@1.120,91", x: 558, tone: "teal", edge: "bottom" },
  { text: "75@1.138,34", x: 682, tone: "teal", edge: "bottom" },
  { text: "50@1.152,77", x: 939, tone: "slate", edge: "bottom" },
];
const LEFT_MARKS: MarkItem[] = [
  { x: 143, y: 258, kind: "exit", color: "#e048f8" },
  { x: 131, y: 303, kind: "up", color: "#4cfcf8" },
  { x: 554, y: 173, kind: "down", color: "#e048f8" },
  { x: 557, y: 199, kind: "exit", color: "#48f0f8" },
  { x: 693, y: 48, kind: "exit", color: "#e838ff" },
  { x: 681, y: 128, kind: "up", color: "#2cf8f4" },
  { x: 929, y: 57, kind: "down", color: "#ff7868" },
  { x: 938, y: 78, kind: "exit", color: "#88b8f4" },
];

const Handle = () => (
  <svg width="9" height="59" viewBox="0 0 9 59">
    <path d="M0 0h9L2 6v46l7 7H0z" fill="#121212" />
    <path d="M9 1L1.500 6v46L9 58" fill="none" stroke="#4c4c4c" />
    <path d="M3 26l6 5-6 5z" fill="#e8e8e8" />
  </svg>
);

const Limit = ({ name }: { name: string }) => (
  <LimitRow>
    <LimitLabel><input type="checkbox" />{name}</LimitLabel>
    <LimitBox><Field $dim aria-label={`Distanza ${name}`} defaultValue="10" disabled /></LimitBox>
    <span>$/shr</span>
  </LimitRow>
);

const BottomEdge = styled.i`
  height: 2px;
  border-top: 1px solid #555;
`;

function BacktestWindow() {
  return (
    <Frame $active>
      <TitleBar $active>
        <Symbol><CandlesIcon colors={["#fff", "#fff"]} /><Caret /><span>GOOG</span></Symbol>
        <InfoBadge $gap={8} aria-label="Informazioni">i</InfoBadge>
        <Quote $boxed>1.152,81 (+0,36%)</Quote>
        <Instrument $bold>16.37.06 Alphabet Inc - C (All Sessions)</Instrument>
        <WinControls />
      </TitleBar>
      <Totals>
        <Total>Ordini: <Figure>0 <PlainButton aria-label="Annulla ordini"><CancelIcon color="#4c5c68" /></PlainButton></Figure><Figure>/ 0<GearsIcon /></Figure></Total>
        <Total>Posizione: <Figure>0 <PlainButton aria-label="Chiudi posizione"><CancelIcon color="#a02428" /></PlainButton></Figure><Figure>/ 0<GearsIcon /></Figure></Total>
        <Total>Guadagno latente: <Figure>$0,00</Figure></Total>
        <Total>Guadagno Giorno: <Figure $loss>-$588,50</Figure></Total>
        <Total>Esposizione : <Figure>$0,00</Figure></Total>
      </Totals>
      <Toolbar $h={59}>
        <Filters>
          <Box $w={111}>
            <Field aria-label="Numero di barre" defaultValue="10000" />
            <Stepper>
              <button aria-label="Aumenta"><Caret up size={6} /></button>
              <button aria-label="Diminuisci"><Caret size={6} /></button>
            </Stepper>
          </Box>
          <DropDown label="Tipo di unità" value="(x) Unità" w={104} gap={2} />
          <DropDown label="Intervallo" value="15 Minuti" w={114} gap={79} />
          <IndicatorButton aria-label="Aggiungi indicatore">
            <IndicatorIcon />
            <svg width="17" height="33" viewBox="0 0 17 33"><path d="M.5 0v33" stroke="#0a0a0a" /><path d="M4 14h10l-5 6z" fill="#e8e8e8" /></svg>
          </IndicatorButton>
        </Filters>
        <TradePanel>
          <Handle />
          <ToolButton aria-label="Impostazioni trading"><Wrench size={19} color="#d0d0d0" /></ToolButton>
          <Column $w={72}>
            <Caption htmlFor="qty">Qtà</Caption>
            <QuantityBox><Field id="qty" defaultValue="1" /></QuantityBox>
          </Column>
          <Divider />
          <Column>
            <Caption as="span">Limite</Caption>
            <Pair>
              <OrderButton aria-label="Limite"><OrderIcon /></OrderButton>
              <OrderButton aria-label="Limite personalizzato"><OrderIcon slash /></OrderButton>
            </Pair>
          </Column>
          <Divider />
          <Column>
            <Caption as="span">Stop</Caption>
            <Pair>
              <OrderButton aria-label="Stop"><OrderIcon stop /></OrderButton>
              <OrderButton aria-label="Stop personalizzato"><OrderIcon stop slash /></OrderButton>
            </Pair>
          </Column>
          <Divider />
          <Column>
            <Caption as="span">Vendi</Caption>
            <DealButton $tone="sell">1.1<b>52,</b><sup>35</sup></DealButton>
          </Column>
          <Column>
            <Caption as="span">Compra</Caption>
            <DealButton $tone="buy">1.1<b>52,</b><sup>66</sup></DealButton>
          </Column>
          <Divider />
          <Limits><Limit name="S" /><Limit name="L" /></Limits>
        </TradePanel>
      </Toolbar>
      <Charts>
        <Pane w={LW} h={286} shade={["#333333", "#242424"]} axis={LEFT_EQUITY_AXIS} title="Curva guadagni e perdite: Il Mio Sistema(48)" tools={<Tools wrench />}>
          <defs>
            <linearGradient id="equity" x1="0" y1="0" x2="0" y2="1">
              <stop offset="0" stopColor="#34ffff" /><stop offset="1" stopColor="#34eaea" />
            </linearGradient>
          </defs>
          <Grid h={286} />
          <polygon points={`0,286 ${EQUITY} 945,286`} fill="url(#equity)" />
          <path d="M128 245l3 26M140 207l3 6.500H550M554 208.500H678M690 14l3 5.500H945" fill="none" stroke="#a02cc8" strokeWidth="2" />
        </Pane>
        <Pane w={LW} h={182} shade={["#232323", "#191919"]} axis={LEFT_POS_AXIS} title="ProBacktest - Posizioni: Il Mio Sistema(48)" tools={<Tools />}>
          <Grid h={182} />
          <g shapeRendering="crispEdges">
            {[130, 133, 136, 139, 680, 683, 686, 689].map((x) => <rect key={x} x={x} y="9" width="2" height="99" fill="#4cf0f0" />)}
            <rect x="553" y="108" width="2" height="67" fill="#b83cf0" />
            <path d="M0 108.500H1153" stroke="#3030b8" />
          </g>
        </Pane>
        <Pane
          w={LW} h={422} shade={["#191919", "#000000"]} axis={LEFT_PRICE_AXIS} tags={LEFT_TAGS} marks={LEFT_MARKS}
          title="Prezzo"
          tools={<><Tools wrench /><TitleTool label="Vendi al mercato"><SheetIcon /></TitleTool><TitleTool label="Compra al mercato"><SheetIcon up /></TitleTool></>}
          overlay={<><DayRange>Giorno:Max 1.154,73 Min 1.146,00</DayRange><Credit>© IT-Finance.com - <i>Dati indicativi</i></Credit></>}
        >
          <defs>
            <linearGradient id="glow" x1="0" y1="0" x2="0" y2="1">
              <stop offset="0" stopColor="#1c7a1c" stopOpacity="0" /><stop offset=".5" stopColor="#1c7a1c" stopOpacity=".32" /><stop offset="1" stopColor="#1c7a1c" stopOpacity="0" />
            </linearGradient>
          </defs>
          <Grid h={422} />
          <rect y="340" width="1153" height="50" fill="url(#glow)" />
          <path d="M0 365H1153" stroke="#3cae3c" strokeWidth="3" />
          <g fill="none" strokeLinejoin="round">
            <path d="M1 310L21 315 54 325 83 331 105 337 115 337" stroke="#e018e0" strokeWidth="2" />
            <path d="M115 337L126 331" stroke="#2c6c50" strokeWidth="1.500" />
            <path d="M126 331L160 321 197 313 230 301 246 297 270 290" stroke="#e018e0" strokeWidth="2" />
            <path d="M270 290L283 283 299 272 319 261 360 260 389 248 440 221" stroke="#3c9488" strokeWidth="1.500" />
            <path d="M440 221L462 219 493 218 524 215 552 212 581 207 605 201" stroke="#44b0a8" strokeWidth="1.500" />
            <path d="M605 201L624 192 646 184 662 177 685 170 703 160 730 146 748 141 768 135 793 130 817 124 850 118 875 113 903 109 924 105 948 99" stroke="#48d8d4" strokeWidth="1.500" />
          </g>
          <path d="M717 113.500H1153" stroke="#38a038" strokeDasharray="22 6" />
          <Candles />
          <path d="M635 58.500H1153" stroke="#e01818" />
        </Pane>
      </Charts>
      <TimeScale days={LEFT_DAYS} start={LEFT_START} step={LEFT_STEP} w={LW} />
      <BottomEdge />
    </Frame>
  );
}

/* ---------- right window ---------- */

const RW = 1144;
const RIGHT_START = 45;
const RIGHT_STEP = 47.42;
const RIGHT_DAYS = ["28", "lug", "02", "03", "05", "08", "09", "10", "11", "12", "15", "16", "17", "18", "19", "22", "23", "24", "25", "26", "29", "30", "31"];
const rightY = (p: number) => 39 + (1160 - p) * 3.66;

const RightFilters = styled.div`
  display: flex;
  align-items: center;
  padding-left: 207px;
`;
const SystemPanel = styled.div`
  display: flex;
  justify-content: space-between;
  width: 319px;
  margin-left: auto;
  padding: 2px 3px 4px 10px;
  border-left: 1px solid #5a5a5a;
  background: #1e1e1e;
`;
const SystemText = styled.div`
  padding-top: 5px;
  line-height: 20px;
`;
const Link = styled.a`
  color: #9494e8;
`;
const SystemButton = styled.button`
  width: 93px;
  height: 50px;
  border: 1px solid #050505;
  border-radius: 4px;
  background: linear-gradient(#3c3c3c, #1c1c1c);
`;
const ScrollRow = styled.div`
  display: flex;
  align-items: center;
  height: 42px;
  padding: 0 7px 3px 1px;
  border-top: 1px solid #555;
  background: linear-gradient(#1c1c1c, #060606);
`;
const ShareButton = styled.button`
  display: flex;
  align-items: center;
  gap: 6px;
  width: 91px;
  height: 28px;
  padding-left: 4px;
  border: 1px solid #0c4c74;
  border-radius: 4px;
  background: linear-gradient(#2f8fcc, #1d6ea4);
  color: #fff;
`;
const ScrollTrack = styled.div`
  display: grid;
  grid-template-columns: 22px 282fr 634fr 22fr 22px;
  flex: 1;
  height: 22px;
  margin: 0 8px 0 3px;
  border: 1px solid #484848;
  border-radius: 2px;
  background: #070707;
`;
const ScrollButton = styled.button<{ $end?: boolean }>`
  grid-column: ${(p) => (p.$end ? 5 : 1)};
  display: grid;
  place-items: center;
  border: 1px solid #3c3c3c;
  background: linear-gradient(#2c2c2c, #101010);
`;
const Thumb = styled.div`
  grid-column: 3;
  display: grid;
  place-items: center;
  border: solid #505050;
  border-width: 0 1px;
  background: linear-gradient(#242424, #0e0e0e);
`;
const ZoomTools = styled.div`
  display: flex;
  align-items: center;
  gap: 11px;
`;
const StatusLine = styled.footer`
  display: flex;
  align-items: center;
  gap: 6px;
  height: 24px;
  padding: 0 7px 2px;
  border: solid #555;
  border-width: 1px 0;
  background: linear-gradient(#0e0e0e, #2c2c2c);
  span { margin-right: auto; }
`;
const Behind = styled.div`
  height: 8px;
  background: #000;
  overflow: hidden;
`;

const RIGHT_EQUITY_AXIS: AxisItem[] = [
  { text: "200", at: 26 }, { text: "100", at: 52 }, { text: "0", at: 78, bold: true }, { text: "-100", at: 105 }, { text: "-200", at: 132 },
  { text: "-300", at: 158 }, { text: "-400", at: 185 }, { text: "-500", at: 212, bold: true }, { text: "-600", at: 239 },
  { text: "-568,50", at: 231, look: "red" },
];
const RIGHT_POS_AXIS: AxisItem[] = [
  { text: "-10", at: 38 }, { text: "-20", at: 69 }, { text: "-30", at: 100 }, { text: "-40", at: 131 }, { text: "0", at: 12, look: "lime" },
];
const RIGHT_PRICE_AXIS: AxisItem[] = [
  { text: "1.170", at: 8 }, { text: "1.160", at: 39 }, { text: "1.130", at: 148 }, { text: "1.120", at: 185 }, { text: "1.110", at: 221 },
  { text: "1.100", at: 258, bold: true }, { text: "1.090", at: 295 }, { text: "1.080", at: 331 }, { text: "1.070", at: 368 }, { text: "1.060", at: 405 },
  { text: "1 Ora", at: 57, look: "pink" }, { text: "1.152,81", at: 65, look: "gold" }, { text: "+0,36%", at: 87, look: "change" },
  { text: "1 Ora", at: 120, look: "sage" }, { text: "7m31s", at: 109, look: "mint" }, { text: "Giornaliero", at: 345, look: "sage" },
];
const RIGHT_TAGS: TagItem[] = [
  { text: "75@1.080,92", x: 92, tone: "red", edge: "top" },
  { text: "50@1.117,27", x: 294, tone: "red", edge: "top" },
  { text: "50@1.146,00", x: 471, tone: "red", edge: "top" },
  { text: "50@1.141,00", x: 566, tone: "red", edge: "top" },
  { text: "75@1.081,80", x: 92, tone: "green", edge: "bottom" },
  { text: "50@1.116,96", x: 295, tone: "green", edge: "bottom" },
  { text: "50@1.144,59", x: 473, tone: "green", edge: "bottom" },
  { text: "50@1.152,77", x: 571, tone: "green", edge: "bottom" },
];
const RED = "#f84848";
const GREEN = "#38c838";
const RIGHT_MARKS: MarkItem[] = [
  { x: 91, y: 318, kind: "exit", color: RED },
  { x: 91, y: 339, kind: "up", color: GREEN },
  { x: 293, y: 182, kind: "down", color: RED },
  { x: 294, y: 219, kind: "exit", color: GREEN },
  { x: 470, y: 85, kind: "down", color: RED },
  { x: 472, y: 112, kind: "exit", color: GREEN },
  { x: 565, y: 62, kind: "down", color: RED },
  { x: 570, y: 83, kind: "exit", color: GREEN },
];

function ProOrderWindow() {
  return (
    <Frame>
      <TitleBar>
        <CandlesIcon colors={["#f07878", "#3ce050"]} />
        <InfoBadge $gap={13} aria-label="Informazioni">i</InfoBadge>
        <Quote>1.152,81 (+0,36%)</Quote>
        <Instrument><b>16.37.06</b> Alphabet Inc - C (All Sessions)</Instrument>
        <WinControls boxed />
      </TitleBar>
      <Toolbar $h={56}>
        <RightFilters>
          <DropDown label="Unità" value="100 unità" w={106} />
          <DropDown label="Intervallo" value="15 Minuti" w={115} gap={270} />
        </RightFilters>
        <SystemPanel>
          <SystemText>
            <b>Il Mio Sistema(48)</b>
            <div>Versione: <Link href="#versione">23-giu-2019 22.12.31</Link></div>
          </SystemText>
          <SystemButton aria-label="Sistema di trading"><SystemIcon /></SystemButton>
        </SystemPanel>
      </Toolbar>
      <Charts>
        <Pane w={RW} h={254} shade={["#333333", "#242424"]} axis={RIGHT_EQUITY_AXIS} title="Curva guadagni e perdite: Il Mio Sistema(48) - 15 Minuti" tools={<Tools />}>
          <defs>
            <linearGradient id="loss" x1="0" y1="69" x2="0" y2="254" gradientUnits="userSpaceOnUse">
              <stop offset="0" stopColor="#000090" /><stop offset="1" stopColor="#1b1b40" />
            </linearGradient>
          </defs>
          <polygon points="0,254 0,79 89,79 92,97 292,97 293,85 295,93 468,93 470,69 472,75 564,75 567,246 569,229 574,231 574,254" fill="url(#loss)" />
          <g fill="none" strokeWidth="2">
            <path d="M0 79H89" stroke="#2ca040" />
            <path d="M89 79L92 97H292" stroke="#d83038" />
            <path d="M292 97L293 85" stroke="#4a8a38" />
            <path d="M293 85L295 93H468" stroke="#d83038" />
            <path d="M468 93L470 69" stroke="#2ca040" />
            <path d="M470 69L472 75H564L567 246" stroke="#e03840" />
            <path d="M567 246L569 229" stroke="#4a8a38" />
            <path d="M569 229L574 231" stroke="#d83038" />
          </g>
          <path d="M49 0V254M375 0V254M400 0V254" stroke="#dcdce8" strokeWidth="2" />
        </Pane>
        <Pane w={RW} h={170} shade={["#232323", "#191919"]} axis={RIGHT_POS_AXIS} title="ProOrder - Posizioni: Il Mio Sistema(48) - 15 Minuti" tools={<Tools />}>
          <path d="M293.500 9V162M470.500 9V162M565.500 9V162" stroke="#c46464" />
          <path d="M568 9V162" stroke="#d87070" strokeWidth="2" />
          <path d="M0 9.500H1144" stroke="#3030b8" />
        </Pane>
        <Pane
          w={RW} h={424} shade={["#1c1c1c", "#000000"]} axis={RIGHT_PRICE_AXIS} tags={RIGHT_TAGS} marks={RIGHT_MARKS}
          title="Prezzo"
          tools={<Tools wrench close={false} />}
          overlay={<Credit>© IT-Finance.com - <i>Dati indicativi</i></Credit>}
        >
          <g shapeRendering="crispEdges">
            {BARS.map((b) => {
              const y = Math.round(rightY(b.high));
              return (
                <rect
                  key={b.at} x={Math.round(RIGHT_START + (b.at * RIGHT_STEP) / 26)} y={y}
                  width="1" height={Math.max(2, Math.round(rightY(b.low)) - y)}
                  fill={b.close > b.open ? "#4cc44c" : "#d86058"}
                />
              );
            })}
          </g>
        </Pane>
      </Charts>
      <TimeScale days={RIGHT_DAYS} start={RIGHT_START} step={RIGHT_STEP} w={RW} />
      <ScrollRow>
        <ShareButton><ShareIcon />Condividi</ShareButton>
        <ScrollTrack>
          <ScrollButton aria-label="Scorri a sinistra"><svg width="6" height="10"><path d="M6 0v10L0 5z" fill="#eee" /></svg></ScrollButton>
          <Thumb><svg width="7" height="7"><path d="M0 1.500h7M0 3.500h7M0 5.500h7" stroke="#888" strokeWidth=".8" /></svg></Thumb>
          <ScrollButton $end aria-label="Scorri a destra"><svg width="6" height="10"><path d="M0 0v10l6-5z" fill="#eee" /></svg></ScrollButton>
        </ScrollTrack>
        <ZoomTools>
          <PlainButton aria-label="Configura grafico"><ChartSetupIcon /></PlainButton>
          <PlainButton aria-label="Adatta"><FitIcon /></PlainButton>
          <PlainButton aria-label="Riduci zoom"><ZoomIcon /></PlainButton>
          <PlainButton aria-label="Aumenta zoom"><ZoomIcon plus /></PlainButton>
        </ZoomTools>
      </ScrollRow>
      <StatusLine>
        <span>Grafico ProOrder: solo per vedere i risultati del sistema di trading</span>
        <AddChartIcon />
        <Link href="#goog">GOOG</Link>
      </StatusLine>
      <Behind>
        <svg width="1222" height="8" viewBox="0 0 1222 8">
          <path d="M0 5.500H110M255 5.500H1222" stroke="#4c4c4c" />
          <path d="M82 0v5h22V0" fill="none" stroke="#555" />
          <rect x="113" y="1" width="8" height="4" fill="#e8a0a0" /><rect x="124" y="1" width="8" height="4" fill="#18c028" />
          <path d="M147 3h12" stroke="#2cb8e8" strokeWidth="2" />
          <path d="M161 1l6 4M198 1l6 4M233 1l6 4" stroke="#d8d8d8" strokeWidth="3" />
          <path d="M605 2h112" stroke="#d8dc20" strokeWidth="2" />
          <path d="M263 2h5M322 2h6M895 2h5M947 2h5M1015 2h5M1077 2h5" stroke="#b0b0b0" />
        </svg>
      </Behind>
    </Frame>
  );
}

const Sliver = () => (
  <svg width="3" height="1000" viewBox="0 0 3 1000">
    <rect y="10" width="3" height="8" fill="#777" />
    <rect y="34" width="3" height="36" fill="#6cd46c" />
    <rect y="72" width="3" height="4" fill="#e04848" />
    <rect y="77" width="3" height="11" fill="#20b828" />
    <rect y="96" width="3" height="900" fill="#1e1e1e" />
    <rect y="422" width="3" height="17" fill="#e07878" />
  </svg>
);

export default function App() {
  return (
    <>
      <Page />
      <Desktop>
        <BacktestWindow />
        <ProOrderWindow />
        <Sliver />
      </Desktop>
    </>
  );
}
